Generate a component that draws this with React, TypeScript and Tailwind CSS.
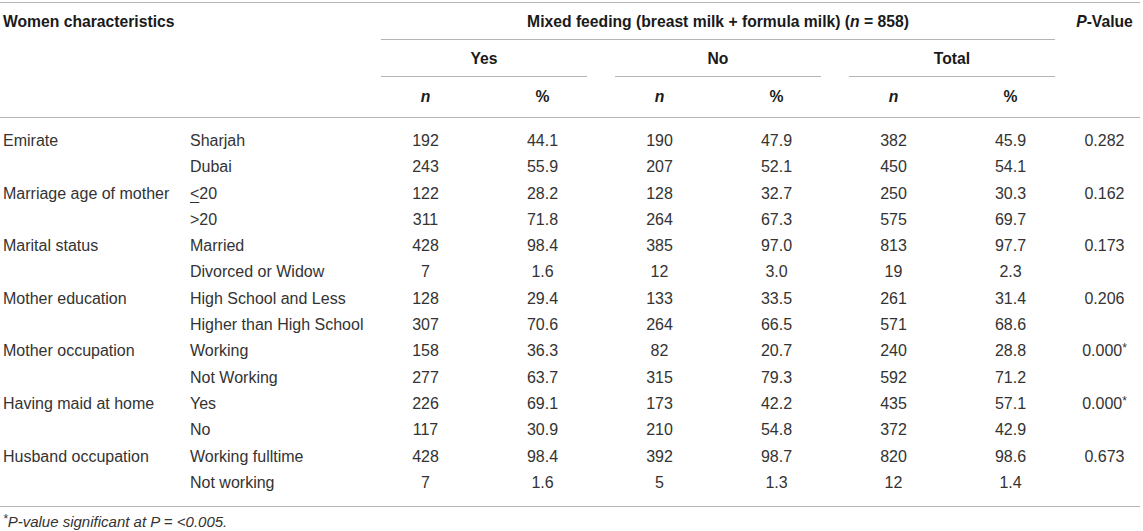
import React from "react";

type Row = {
  label?: string;
  sub: React.ReactNode;
  vals: string[];
  p?: React.ReactNode;
};

const star = (v: string) => (
  <span>
    {v}
    <span className="text-[12px] relative top-[-4px]">*</span>
  </span>
);

const rows: Row[] = [
  { label: "Emirate", sub: "Sharjah", vals: ["192", "44.1", "190", "47.9", "382", "45.9"], p: "0.282" },
  { sub: "Dubai", vals: ["243", "55.9", "207", "52.1", "450", "54.1"] },
  {
    label: "Marriage age of mother",
    sub: (
      <span>
        <span className="underline underline-offset-[3px]">&lt;</span>20
      </span>
    ),
    vals: ["122", "28.2", "128", "32.7", "250", "30.3"],
    p: "0.162",
  },
  { sub: ">20", vals: ["311", "71.8", "264", "67.3", "575", "69.7"] },
  { label: "Marital status", sub: "Married", vals: ["428", "98.4", "385", "97.0", "813", "97.7"], p: "0.173" },
  { sub: "Divorced or Widow", vals: ["7", "1.6", "12", "3.0", "19", "2.3"] },
  { label: "Mother education", sub: "High School and Less", vals: ["128", "29.4", "133", "33.5", "261", "31.4"], p: "0.206" },
  { sub: "Higher than High School", vals: ["307", "70.6", "264", "66.5", "571", "68.6"] },
  { label: "Mother occupation", sub: "Working", vals: ["158", "36.3", "82", "20.7", "240", "28.8"], p: star("0.000") },
  { sub: "Not Working", vals: ["277", "63.7", "315", "79.3", "592", "71.2"] },
  { label: "Having maid at home", sub: "Yes", vals: ["226", "69.1", "173", "42.2", "435", "57.1"], p: star("0.000") },
  { sub: "No", vals: ["117", "30.9", "210", "54.8", "372", "42.9"] },
  { label: "Husband occupation", sub: "Working fulltime", vals: ["428", "98.4", "392", "98.7", "820", "98.6"], p: "0.673" },
  { sub: "Not working", vals: ["7", "1.6", "5", "1.3", "12", "1.4"] },
];

const grid = "grid grid-cols-[187px_180px_117px_117px_117px_117px_117px_117px_71px]";

export default function App() {
  return (
    <div
      className="w-[1143px] h-[531px] bg-white overflow-hidden"
      style={{ fontFamily: '"Liberation Sans", Arial, sans-serif' }}
    >
      <div className="w-[1140px] mt-[2px] border-t border-[#b4b4b4]">
        {/* Header */}
        <div className={`${grid} grid-rows-[37px_37px_40px] border-b border-[#b4b4b4] text-[#1a1a1a] font-bold text-[15.7px] leading-[24px]`}>
          <div className="col-span-2 row-span-3 pl-[3px] pt-[7px]">Women characteristics</div>
          <div className="col-span-6 px-[14px]">
            <div className="h-full border-b border-[#b4b4b4] pt-[7px] text-center">
              Mixed feeding (breast milk + formula milk) (<i>n</i> = 858)
            </div>
          </div>
          <div className="row-span-3 pt-[7px] text-center">
            <i>P</i>-Value
          </div>
          {["Yes", "No", "Total"].map((g) => (
            <div key={g} className="col-span-2 px-[14px]">
              <div className="h-full border-b border-[#b4b4b4] pt-[7px] text-center">{g}</div>
            </div>
          ))}
          {[0, 1, 2].map((i) => (
            <React.Fragment key={i}>
              <div className="pt-[8px] text-center">
                <i>n</i>
              </div>
              <div className="pt-[8px] text-center">%</div>
            </React.Fragment>
          ))}
        </div>
        {/* Body */}
        <div className="pt-[10px] pb-[10px] border-b border-[#b4b4b4] text-[#333] text-[16px]">
          {rows.map((r, i) => (
            <div key={i} className={`${grid} h-[26.3px] leading-[26.3px] whitespace-nowrap`}>
              <div className="pl-[3px]">{r.label ?? ""}</div>
              <div className="pl-[3px]">{r.sub}</div>
              {r.vals.map((v, j) => (
                <div key={j} className="text-center">
                  {v}
                </div>
              ))}
              <div className="text-center">{r.p ?? ""}</div>
            </div>
          ))}
        </div>
        <div className="pl-[3px] pt-[5px] text-[15px] leading-[20px] italic text-[#333]">
          <span className="text-[12px] relative top-[-4px]">*</span>P-value significant at <i>P</i> = &lt;0.005.
        </div>
      </div>
    </div>
  );
}
